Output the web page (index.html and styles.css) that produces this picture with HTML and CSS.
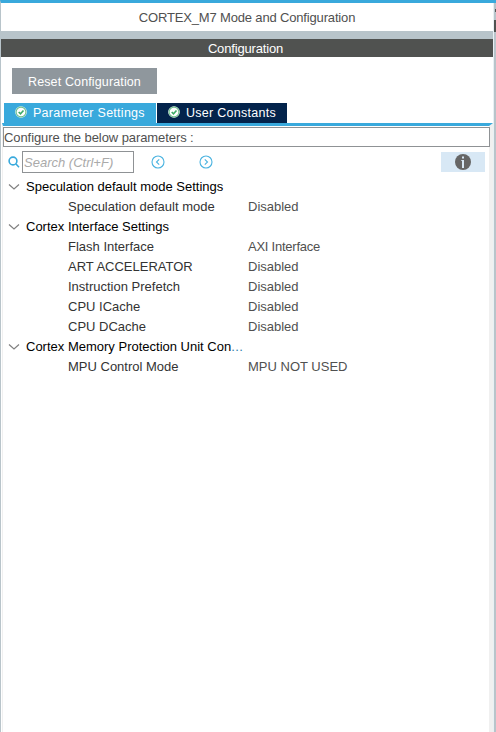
FILE: index.html
```html
<!DOCTYPE html>
<html lang="en">
<head>
<meta charset="utf-8">
<title>CORTEX_M7 Mode and Configuration</title>
<link rel="stylesheet" href="styles.css">
</head>
<body>
<div class="window">
  <header class="title"><span class="t-title">CORTEX_M7 Mode and Configuration</span></header>
  <div class="divider"></div>
  <div class="section"><span class="t-section">Configuration</span></div>
  <main class="content">
    <button class="reset"><span class="t-reset">Reset Configuration</span></button>
    <nav class="tabs">
      <div class="tab active">
        <svg class="check" viewBox="0 0 12 12"><circle class="disc" cx="6" cy="6" r="5.8"/><circle class="ring" cx="6" cy="6" r="4.9"/><path d="M3.7 6l1.8 1.9 3-3.4"/></svg>
        <span class="t-tab">Parameter Settings</span>
      </div>
      <div class="tab">
        <svg class="check" viewBox="0 0 12 12"><circle class="disc" cx="6" cy="6" r="5.8"/><circle class="ring" cx="6" cy="6" r="4.9"/><path d="M3.7 6l1.8 1.9 3-3.4"/></svg>
        <span class="t-tab">User Constants</span>
      </div>
    </nav>
    <section class="panel">
      <div class="hint"><span class="t-hint">Configure the below parameters :</span></div>
      <div class="toolbar">
        <svg class="lens" viewBox="0 0 12 12"><circle cx="5" cy="5" r="3.9"/><path d="M8 8l3 3.2"/></svg>
        <div class="search"><span class="t-search">Search (Ctrl+F)</span></div>
        <svg class="arrow" viewBox="0 0 14 14"><circle cx="7" cy="7" r="6"/><path d="M8.2 4.3L5.5 7l2.7 2.7"/></svg>
        <svg class="arrow next" viewBox="0 0 14 14"><circle cx="7" cy="7" r="6"/><path d="M5.8 4.3L8.5 7 5.8 9.7"/></svg>
        <div class="info"><svg viewBox="0 0 16 16"><circle cx="8" cy="8" r="8"/><path d="M7 2.5h2v2H7zM6.3 6H9v8H7V7h-.7z"/></svg></div>
      </div>
      <div class="tree">
        <div class="group"><svg viewBox="0 0 12 8"><path d="M1 1.5l5 4.5 5-4.5"/></svg><span>Speculation default mode Settings</span></div>
        <div class="row"><span class="name">Speculation default mode</span><span>Disabled</span></div>
        <div class="group"><svg viewBox="0 0 12 8"><path d="M1 1.5l5 4.5 5-4.5"/></svg><span>Cortex Interface Settings</span></div>
        <div class="row"><span class="name">Flash Interface</span><span class="v-axi">AXI Interface</span></div>
        <div class="row"><span class="name">ART ACCELERATOR</span><span>Disabled</span></div>
        <div class="row"><span class="name">Instruction Prefetch</span><span>Disabled</span></div>
        <div class="row"><span class="name">CPU ICache</span><span>Disabled</span></div>
        <div class="row"><span class="name">CPU DCache</span><span>Disabled</span></div>
        <div class="group"><svg viewBox="0 0 12 8"><path d="M1 1.5l5 4.5 5-4.5"/></svg><span>Cortex Memory Protection Unit Con<span class="dots">...</span></span></div>
        <div class="row"><span class="name">MPU Control Mode</span><span>MPU NOT USED</span></div>
      </div>
    </section>
  </main>
  <div class="edge"><i class="mark"></i><i class="mark tall"></i></div>
</div>
</body>
</html>
```
FILE: styles.css
```css
* { box-sizing: border-box; }
body { margin: 0; background: #fff; font: 13px/20px "Liberation Sans", Arial, sans-serif; color: #505050; white-space: nowrap; }
svg { display: block; flex: none; fill: none; }
.window { position: relative; height: 732px; border-top: 3px solid #39a9dc; border-left: 1px solid #b8c4ca; overflow: hidden; display: flex; flex-direction: column; }
.title { height: 28px; display: flex; justify-content: center; align-items: center; padding: 1px 3px 0 0; }
.t-title { letter-spacing: -0.16px; }
.divider { height: 8px; flex: none; background: #b8c4ca; }
.section { height: 18px; flex: none; background: #505250; color: #fff; display: flex; justify-content: center; align-items: center; padding: 1px 6px 0 0; }
.t-section { letter-spacing: -0.16px; }
.content { flex: 1; display: flex; flex-direction: column; align-items: flex-start; }
.reset { margin: 11px 0 9px 11px; width: 145px; height: 26px; padding: 2px 0 0 16px; border: 0; background: #8f979d; color: #fff; font: inherit; text-align: left; }
.t-reset { font-size: 12.5px; letter-spacing: 0.13px; }
.tabs { display: flex; gap: 1px; height: 20px; margin-left: 3px; }
.tab { display: flex; align-items: center; background: #03234b; color: #fff; width: 130px; padding-left: 11px; }
.tab.active { background: #39a9dc; width: 152px; }
.t-tab { font-size: 12.5px; letter-spacing: 0.27px; }
.check { width: 12px; height: 12px; margin: -2px 6px 0 0; }
.check .disc { fill: #fff; }
.check .ring { stroke: #6fc08d; stroke-width: 1.1; }
.check path { stroke: #3dab66; stroke-width: 1.6; }
.panel { width: 491px; flex: 1; margin-left: 1px; border-top: 3px solid #39a9dc; border-left: 1px solid #f0f0f0; border-right: 4px solid #f0f0f0; padding-top: 1px; }
.hint { width: 487px; height: 20px; border: 1px solid #8f9295; line-height: 19px; }
.t-hint { letter-spacing: -0.08px; }
.toolbar { display: flex; align-items: center; height: 30px; padding-left: 5px; }
.lens { width: 12px; height: 12px; stroke: #39a9dc; stroke-width: 1.6; }
.search { width: 112px; height: 22px; margin: 0 17px 0 2px; border: 1px solid #8f9295; padding-left: 1px; font-style: italic; color: #aaa; line-height: 21px; }
.arrow { width: 14px; height: 14px; stroke: #4ab3e0; stroke-width: 1.1; }
.next { margin: 0 228px 0 34px; }
.info { width: 44px; height: 20px; flex: none; background: #d8e8f5; display: flex; align-items: center; justify-content: center; }
.info svg { width: 16px; height: 16px; }
.info circle { fill: #666; }
.info path { fill: #d8e8f5; }
.group, .row { display: flex; align-items: center; height: 20px; }
.group { color: #000; padding-left: 5px; }
.group svg { width: 12px; height: 8px; margin-right: 6px; stroke: #808080; stroke-width: 1.2; }
.row { padding-left: 65px; }
.name { width: 180px; color: #333; }
.v-axi { letter-spacing: -0.24px; }
.dots { color: #2f7fac; letter-spacing: 0.4px; }
.edge { position: absolute; right: 0; top: 0; width: 3px; height: 729px; border-left: 1px solid #e8f0f4; background: #b8c4ca; }
.mark { position: absolute; right: 0; top: 6px; width: 1px; height: 3px; background: #555; }
.mark.tall { top: 17px; width: 2px; height: 12px; background: #505250; }
```
